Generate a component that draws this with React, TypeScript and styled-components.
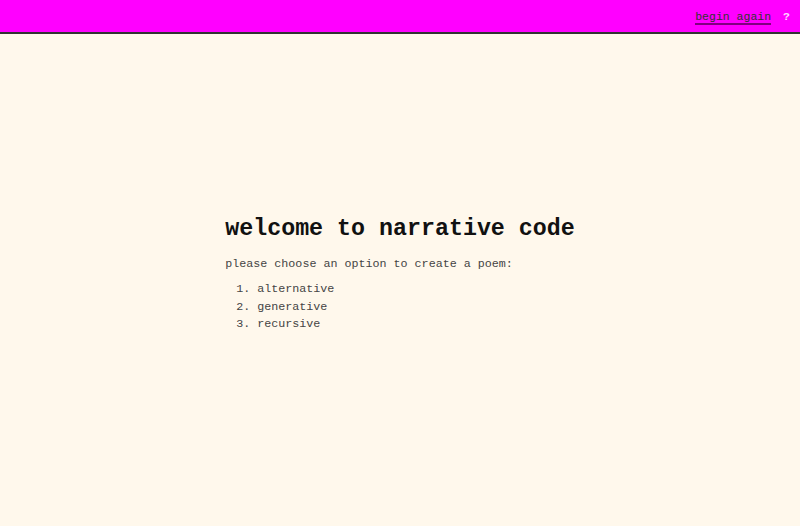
import React from "react";
import styled, { createGlobalStyle } from "styled-components";

const Global = createGlobalStyle`
  html, body { margin: 0; padding: 0; height: 100%; }
  body { background: #fff8ec; font-family: "Liberation Mono", "Courier New", monospace; }
  #root { min-height: 100vh; display: flex; flex-direction: column; }
`;

const Header = styled.header`
  height: 32px;
  background: #ff00ff;
  border-bottom: 2px solid #333333;
  display: flex;
  align-items: center;
  justify-content: flex-end;
  padding: 0 10px 0 0;
  gap: 12px;
  flex-shrink: 0;
`;

const HeaderLink = styled.a`
  font-size: 11.5px;
  color: #333;
  text-decoration: none;
  border-bottom: 2px solid #800080;
  line-height: 13px;
  margin-top: 2px;
  cursor: pointer;
`;

const Help = styled.span`
  font-size: 11.5px;
  font-weight: bold;
  color: #ffd6ff;
`;

const Main = styled.main`
  flex: 1;
  display: flex;
  align-items: center;
  justify-content: center;
`;

const Intro = styled.section`
  display: flex;
  flex-direction: column;
  margin-top: -10px;
`;

const Title = styled.h1`
  font-size: 23.3px;
  font-weight: bold;
  color: #111;
  margin: 0 0 15px 0;
  line-height: 26px;
`;

const Prompt = styled.p`
  font-size: 11.7px;
  color: #444;
  margin: 0 0 10px 0;
  line-height: 14px;
`;

const Options = styled.ol`
  margin: 0;
  padding: 0 0 0 32px;
  font-size: 11.7px;
  color: #444;
`;

const Option = styled.li`
  line-height: 17.5px;
  cursor: pointer;
`;

export default function App() {
  return (
    <>
      <Global />
      <Header>
        <HeaderLink>begin again</HeaderLink>
        <Help>?</Help>
      </Header>
      <Main>
        <Intro>
          <Title>welcome to narrative code</Title>
          <Prompt>please choose an option to create a poem:</Prompt>
          <Options>
            <Option>alternative</Option>
            <Option>generative</Option>
            <Option>recursive</Option>
          </Options>
        </Intro>
      </Main>
    </>
  );
}
